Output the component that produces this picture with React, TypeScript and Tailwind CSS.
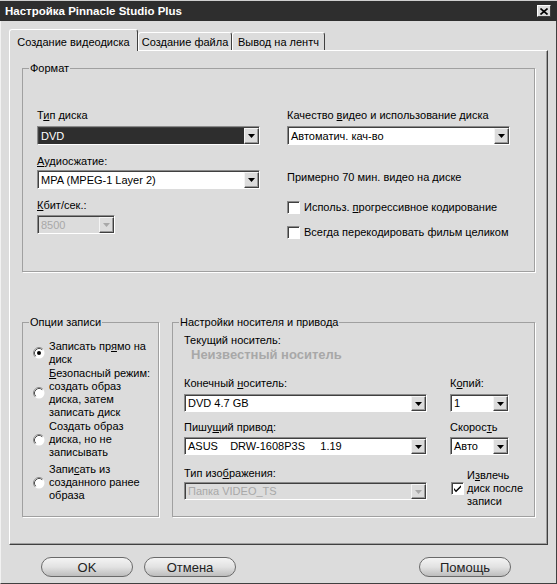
import React from 'react';

const U = ({ children }: { children: React.ReactNode }) => <span className="underline underline-offset-[1px]">{children}</span>;

const Arrow = ({ disabled }: { disabled?: boolean }) => (
  <div className="w-[15px] flex items-center justify-center bg-[#dcdcdc] border-t border-l border-t-[#f4f4f4] border-l-[#f4f4f4] border-b border-r border-b-[#404040] border-r-[#404040] shadow-[inset_-1px_-1px_0_#9a9a9a]">
    <svg width="7" height="4" viewBox="0 0 7 4">
      <path d="M0 0h7L3.5 4z" fill={disabled ? '#a8a8a8' : '#000'} />
    </svg>
  </div>
);

type ComboProps = { value: string; width: string; height?: string; disabled?: boolean; focused?: boolean };

const Combo = ({ value, width, height = 'h-[19px]', disabled, focused }: ComboProps) => (
  <div className={`${width} ${height} flex border-t border-l border-t-[#8a8a8a] border-l-[#8a8a8a] border-b border-r border-b-white border-r-white`}>
    <div className={`flex-1 flex border-t border-l border-t-[#404040] border-l-[#404040] ${disabled ? 'bg-[#dcdcdc]' : 'bg-white'}`}>
      <div
        className={`flex-1 flex items-center pl-[2px] whitespace-pre ${
          focused ? 'bg-[#2e2e2e] text-white' : disabled ? 'text-[#a8a8a8]' : 'text-black'
        }`}
      >
        {value}
      </div>
      <Arrow disabled={disabled} />
    </div>
  </div>
);

const Check = ({ checked }: { checked?: boolean }) => (
  <div className="w-[13px] h-[13px] shrink-0 bg-white border-t border-l border-t-[#8a8a8a] border-l-[#8a8a8a] border-b border-r border-b-white border-r-white shadow-[inset_1px_1px_0_#404040] flex items-center justify-center">
    {checked && (
      <svg width="9" height="9" viewBox="0 0 9 9">
        <path d="M1 4l2 2.2L8 1.2v2L3 8.2 1 6z" fill="#000" />
      </svg>
    )}
  </div>
);

const Radio = ({ checked }: { checked?: boolean }) => (
  <svg width="12" height="12" viewBox="0 0 12 12" className="shrink-0">
    <circle cx="6" cy="6" r="5.5" fill="#fff" />
    <path d="M2.11 9.89A5.5 5.5 0 0 1 9.89 2.11" stroke="#8a8a8a" fill="none" />
    <path d="M2.82 9.18A4.5 4.5 0 0 1 9.18 2.82" stroke="#505050" fill="none" />
    {checked && <circle cx="6" cy="6" r="2" fill="#000" />}
  </svg>
);

const groupCls = 'border border-[#a0a0a0] shadow-[1px_1px_0_#fff]';

export default function App() {
  return (
    <div className="w-[557px] h-[584px] bg-[#dcdcdc] text-[11px] leading-[13px] text-black font-['Liberation_Sans',Arial,sans-serif] flex flex-col overflow-hidden">
      {/* Title bar */}
      <div className="h-[21px] shrink-0 bg-[#2e2e2e] border-t border-t-[#cfcfcf] flex items-center justify-between pl-[5px] pr-[6px]">
        <span className="text-white font-bold text-[11.5px] leading-[14px]">Настройка Pinnacle Studio Plus</span>
        <div className="w-[14px] h-[12px] bg-[#dcdcdc] border-t border-l border-t-white border-l-white border-b border-r border-b-[#404040] border-r-[#404040] flex items-center justify-center">
          <svg width="8" height="7" viewBox="0 0 8 7">
            <path d="M0.5 0.5l7 6M7.5 0.5l-7 6" stroke="#000" strokeWidth="1.6" />
          </svg>
        </div>
      </div>

      <div className="flex-1 flex flex-col pl-[8px] pt-[8px] border-l border-l-[#f2f2f2] border-r border-r-[#404040] border-b border-b-[#404040]">
        {/* Tabs */}
        <div className="h-[21px] flex items-end">
          <div className="relative z-10 w-[129px] h-[22px] -mb-[1px] bg-[#dcdcdc] border-t border-l border-t-white border-l-white border-r border-r-[#404040] rounded-t-[3px] flex items-center justify-center pt-[3px]">
            Создание видеодиска
          </div>
          <div className="w-[94px] h-[18px] border-t border-l border-t-white border-l-white border-r border-r-[#404040] rounded-t-[3px] flex items-center justify-center pt-[1px]">
            Создание файла
          </div>
          <div className="w-[93px] h-[18px] border-t border-l border-t-white border-l-white border-r border-r-[#404040] rounded-t-[3px] flex items-center justify-center pt-[1px]">
            Вывод на лентч
          </div>
        </div>

        {/* Tab panel */}
        <div className="w-[539px] h-[495px] shrink-0 border-t border-l border-t-white border-l-white border-r border-b border-r-[#404040] border-b-[#404040] shadow-[inset_-1px_-1px_0_#a0a0a0] flex flex-col">
          <fieldset className={`ml-[12px] mt-[11px] w-[513px] h-[210px] ${groupCls}`}>
            <legend className="ml-[6px] px-[1px]">Формат</legend>
            <div className="flex pl-[14px] pt-[34px]">
              <div className="w-[250px] flex flex-col">
                <div>Т<U>и</U>п диска</div>
                <div className="mt-[4px]">
                  <Combo value="DVD" width="w-[223px]" focused />
                </div>
                <div className="mt-[10px]">
                  <U>А</U>удиосжатие:
                </div>
                <div className="mt-[2px]">
                  <Combo value="MPA (MPEG-1 Layer 2)" width="w-[223px]" />
                </div>
                <div className="mt-[10px]">
                  <U>К</U>бит/сек.:
                </div>
                <div className="mt-[3px]">
                  <Combo value="8500" width="w-[78px]" disabled />
                </div>
              </div>
              <div className="flex flex-col">
                <div>
                  Качество <U>в</U>идео и использование диска
                </div>
                <div className="mt-[4px]">
                  <Combo value="Автоматич. кач-во" width="w-[223px]" />
                </div>
                <div className="mt-[26px]">Примерно 70 мин. видео на диске</div>
                <div className="mt-[17px] flex items-center gap-[4px]">
                  <Check />
                  <span>
                    Использ. <U>п</U>рогрессивное кодирование
                  </span>
                </div>
                <div className="mt-[12px] flex items-center gap-[4px]">
                  <Check />
                  <span>Всегда перекодировать фильм целиком</span>
                </div>
              </div>
            </div>
          </fieldset>

          <div className="ml-[12px] mt-[44px] flex gap-[13px]">
            {/* Recording options */}
            <fieldset className={`w-[137px] h-[201px] ${groupCls}`}>
              <legend className="ml-[6px] px-[1px]">Опции записи</legend>
              <div className="pl-[10px] pt-[11px] flex flex-col leading-[13.3px]">
                <div className="flex items-center gap-[4px]">
                  <Radio checked />
                  <span>
                    Записать пр<U>я</U>мо на
                    <br />
                    диск
                  </span>
                </div>
                <div className="flex items-center gap-[4px]">
                  <Radio />
                  <span>
                    <U>Б</U>езопасный режим:
                    <br />
                    создать образ
                    <br />
                    диска, затем
                    <br />
                    записать диск
                  </span>
                </div>
                <div className="flex items-center gap-[4px]">
                  <Radio />
                  <span>
                    Соз<U>д</U>ать образ
                    <br />
                    диска, но не
                    <br />
                    записывать
                  </span>
                </div>
                <div className="mt-[3px] flex items-center gap-[4px]">
                  <Radio />
                  <span>
                    Запи<U>с</U>ать из
                    <br />
                    созданного ранее
                    <br />
                    образа
                  </span>
                </div>
              </div>
            </fieldset>

            {/* Media and drive settings */}
            <fieldset className={`w-[363px] h-[201px] ${groupCls}`}>
              <legend className="ml-[6px] px-[1px]">Настройки носителя и привода</legend>
              <div className="pl-[11px] pt-[5px] flex flex-col">
                <div>Текущий носитель:</div>
                <div className="pl-[7px] text-[13px] leading-[16px] font-bold text-[#a8a8a8]">Неизвестный носитель</div>

                <div className="mt-[14px] flex">
                  <div className="w-[243px]">
                    Конечный <U>н</U>оситель:
                  </div>
                  <div className="ml-[23px]">
                    К<U>о</U>пий:
                  </div>
                </div>
                <div className="mt-[4px] flex">
                  <Combo value="DVD 4.7 GB" width="w-[243px]" height="h-[18px]" />
                  <div className="ml-[23px]">
                    <Combo value="1" width="w-[59px]" height="h-[18px]" />
                  </div>
                </div>

                <div className="mt-[9px] flex">
                  <div className="w-[243px]">
                    Пишу<U>щ</U>ий привод:
                  </div>
                  <div className="ml-[23px]">
                    Скорос<U>т</U>ь
                  </div>
                </div>
                <div className="mt-[3px] flex">
                  <Combo value={'ASUS    DRW-1608P3S     1.19'} width="w-[243px]" height="h-[18px]" />
                  <div className="ml-[23px]">
                    <Combo value="Авто" width="w-[59px]" height="h-[18px]" />
                  </div>
                </div>

                <div className="flex">
                  <div className="w-[243px] flex flex-col">
                    <div className="mt-[12px]">
                      Тип изо<U>б</U>ражения:
                    </div>
                    <div className="mt-[2px]">
                      <Combo value="Папка VIDEO_TS" width="w-[243px]" height="h-[18px]" disabled />
                    </div>
                  </div>
                  <div className="ml-[24px] pt-[14px] flex items-center gap-[3px]">
                    <Check checked />
                    <span>
                      И<U>з</U>влечь
                      <br />
                      диск после
                      <br />
                      записи
                    </span>
                  </div>
                </div>
              </div>
            </fieldset>
          </div>
        </div>

        {/* Buttons */}
        <div className="flex pt-[12px] pl-[32px] pr-[45px] text-[13px]">
          <button className="w-[92px] h-[20px] rounded-full border border-[#6a6a6a] bg-gradient-to-b from-[#f4f4f4] via-[#e2e2e2] to-[#bdbdbd] text-[#222] flex items-center justify-center">
            OK
          </button>
          <button className="ml-[11px] w-[92px] h-[20px] rounded-full border border-[#6a6a6a] bg-gradient-to-b from-[#f4f4f4] via-[#e2e2e2] to-[#bdbdbd] text-[#222] flex items-center justify-center">
            Отмена
          </button>
          <button className="ml-auto w-[92px] h-[20px] rounded-full border border-[#6a6a6a] bg-gradient-to-b from-[#f4f4f4] via-[#e2e2e2] to-[#bdbdbd] text-[#222] flex items-center justify-center">
            Помощь
          </button>
        </div>
      </div>
    </div>
  );
}
